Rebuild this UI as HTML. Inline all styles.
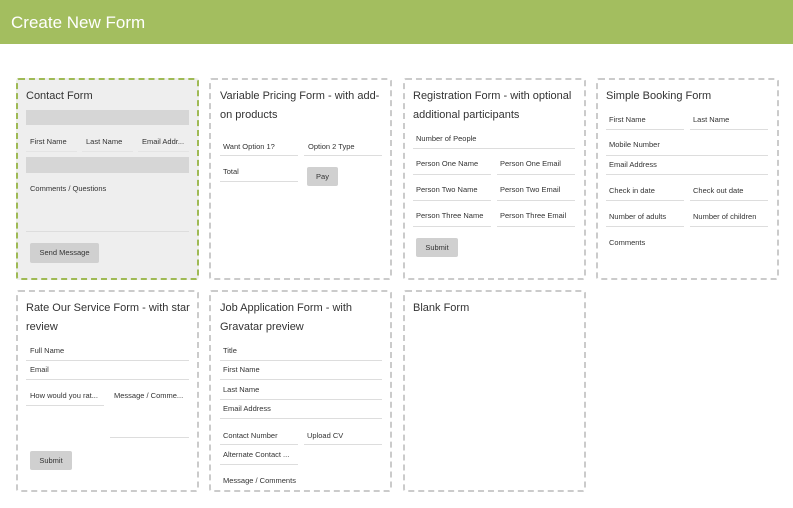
<!DOCTYPE html>
<html><head><style>
*{margin:0;padding:0;box-sizing:border-box}
body{width:793px;height:508px;background:#fff;font-family:"Liberation Sans",sans-serif;position:relative;overflow:hidden;color:#333}
.hd{position:absolute;left:0;top:0;width:793px;height:44px;background:#a3be5f;color:#fff;font-size:17px;line-height:45px;padding-left:11px}
.c{position:absolute;width:183px;height:202px;border:2px dashed #cbcbcb;border-radius:3px}
.t{position:absolute;font-size:11px;line-height:19px;color:#333;white-space:nowrap}
.l{position:absolute;font-size:7.5px;line-height:10px;color:#333;white-space:nowrap}
.u{position:absolute;height:1px;background:#ddd}
.b{position:absolute;background:#d0d0d0;border-radius:2px;font-size:7.5px;color:#333;text-align:center}
.g{position:absolute;background:#d6d6d6}
</style></head><body>
<div class="hd">Create New Form</div>

<div class="c" style="left:16px;top:78px;background:#eee;border-color:#9fba55"></div>
<div class="c" style="left:209px;top:78px"></div>
<div class="c" style="left:403px;top:78px"></div>
<div class="c" style="left:596px;top:78px"></div>
<div class="c" style="left:16px;top:290px"></div>
<div class="c" style="left:209px;top:290px"></div>
<div class="c" style="left:403px;top:290px"></div>

<!-- card 1 -->
<div class="t" style="left:26px;top:87px">Contact Form</div>
<div class="g" style="left:26px;top:110px;width:163px;height:15px"></div>
<div class="l" style="left:30px;top:137px">First Name</div>
<div class="l" style="left:86px;top:137px">Last Name</div>
<div class="l" style="left:142px;top:137px">Email Addr...</div>
<div class="u" style="left:26px;top:151px;width:51px;background:#e4e4e4"></div>
<div class="u" style="left:82px;top:151px;width:51px;background:#e4e4e4"></div>
<div class="u" style="left:138px;top:151px;width:51px;background:#e4e4e4"></div>
<div class="g" style="left:26px;top:157px;width:163px;height:16px"></div>
<div class="l" style="left:30px;top:184px">Comments / Questions</div>
<div class="u" style="left:26px;top:231px;width:163px"></div>
<div class="b" style="left:30px;top:243px;width:69px;height:20px;line-height:20px">Send Message</div>

<!-- card 2 -->
<div class="t" style="left:220px;top:87px">Variable Pricing Form - with add-</div>
<div class="t" style="left:220px;top:106px">on products</div>
<div class="l" style="left:223px;top:142px">Want Option 1?</div>
<div class="l" style="left:308px;top:142px">Option 2 Type</div>
<div class="u" style="left:220px;top:155px;width:78px"></div>
<div class="u" style="left:304px;top:155px;width:78px"></div>
<div class="l" style="left:223px;top:167px">Total</div>
<div class="u" style="left:220px;top:181px;width:78px"></div>
<div class="b" style="left:307px;top:167px;width:31px;height:19px;line-height:19px">Pay</div>

<!-- card 3 -->
<div class="t" style="left:413px;top:87px">Registration Form - with optional</div>
<div class="t" style="left:413px;top:106px">additional participants</div>
<div class="l" style="left:416px;top:134px">Number of People</div>
<div class="u" style="left:413px;top:148px;width:162px"></div>
<div class="l" style="left:416px;top:159px">Person One Name</div>
<div class="l" style="left:500px;top:159px">Person One Email</div>
<div class="u" style="left:413px;top:174px;width:78px"></div>
<div class="u" style="left:497px;top:174px;width:78px"></div>
<div class="l" style="left:416px;top:185px">Person Two Name</div>
<div class="l" style="left:500px;top:185px">Person Two Email</div>
<div class="u" style="left:413px;top:200px;width:78px"></div>
<div class="u" style="left:497px;top:200px;width:78px"></div>
<div class="l" style="left:416px;top:211px">Person Three Name</div>
<div class="l" style="left:500px;top:211px">Person Three Email</div>
<div class="u" style="left:413px;top:226px;width:78px"></div>
<div class="u" style="left:497px;top:226px;width:78px"></div>
<div class="b" style="left:416px;top:238px;width:42px;height:19px;line-height:19px">Submit</div>

<!-- card 4 -->
<div class="t" style="left:606px;top:87px">Simple Booking Form</div>
<div class="l" style="left:609px;top:115px">First Name</div>
<div class="l" style="left:693px;top:115px">Last Name</div>
<div class="u" style="left:606px;top:129px;width:78px"></div>
<div class="u" style="left:690px;top:129px;width:78px"></div>
<div class="l" style="left:609px;top:140px">Mobile Number</div>
<div class="u" style="left:606px;top:155px;width:162px"></div>
<div class="l" style="left:609px;top:160px">Email Address</div>
<div class="u" style="left:606px;top:174px;width:162px"></div>
<div class="l" style="left:609px;top:186px">Check in date</div>
<div class="l" style="left:693px;top:186px">Check out date</div>
<div class="u" style="left:606px;top:200px;width:78px"></div>
<div class="u" style="left:690px;top:200px;width:78px"></div>
<div class="l" style="left:609px;top:212px">Number of adults</div>
<div class="l" style="left:693px;top:212px">Number of children</div>
<div class="u" style="left:606px;top:226px;width:78px"></div>
<div class="u" style="left:690px;top:226px;width:78px"></div>
<div class="l" style="left:609px;top:238px">Comments</div>

<!-- row2 card1 -->
<div class="t" style="left:26px;top:299px">Rate Our Service Form - with star</div>
<div class="t" style="left:26px;top:318px">review</div>
<div class="l" style="left:30px;top:346px">Full Name</div>
<div class="u" style="left:26px;top:360px;width:163px"></div>
<div class="l" style="left:30px;top:365px">Email</div>
<div class="u" style="left:26px;top:379px;width:163px"></div>
<div class="l" style="left:30px;top:391px">How would you rat...</div>
<div class="l" style="left:114px;top:391px">Message / Comme...</div>
<div class="u" style="left:26px;top:405px;width:78px"></div>
<div class="u" style="left:110px;top:437px;width:79px"></div>
<div class="b" style="left:30px;top:451px;width:42px;height:19px;line-height:19px">Submit</div>

<!-- row2 card2 -->
<div class="t" style="left:220px;top:299px">Job Application Form - with</div>
<div class="t" style="left:220px;top:318px">Gravatar preview</div>
<div class="l" style="left:223px;top:346px">Title</div>
<div class="u" style="left:220px;top:360px;width:162px"></div>
<div class="l" style="left:223px;top:365px">First Name</div>
<div class="u" style="left:220px;top:379px;width:162px"></div>
<div class="l" style="left:223px;top:385px">Last Name</div>
<div class="u" style="left:220px;top:399px;width:162px"></div>
<div class="l" style="left:223px;top:404px">Email Address</div>
<div class="u" style="left:220px;top:418px;width:162px"></div>
<div class="l" style="left:223px;top:431px">Contact Number</div>
<div class="l" style="left:307px;top:431px">Upload CV</div>
<div class="u" style="left:220px;top:444px;width:78px"></div>
<div class="u" style="left:304px;top:444px;width:78px"></div>
<div class="l" style="left:223px;top:450px">Alternate Contact ...</div>
<div class="u" style="left:220px;top:464px;width:78px"></div>
<div class="l" style="left:223px;top:476px">Message / Comments</div>

<!-- row2 card3 -->
<div class="t" style="left:413px;top:299px">Blank Form</div>
</body></html>
